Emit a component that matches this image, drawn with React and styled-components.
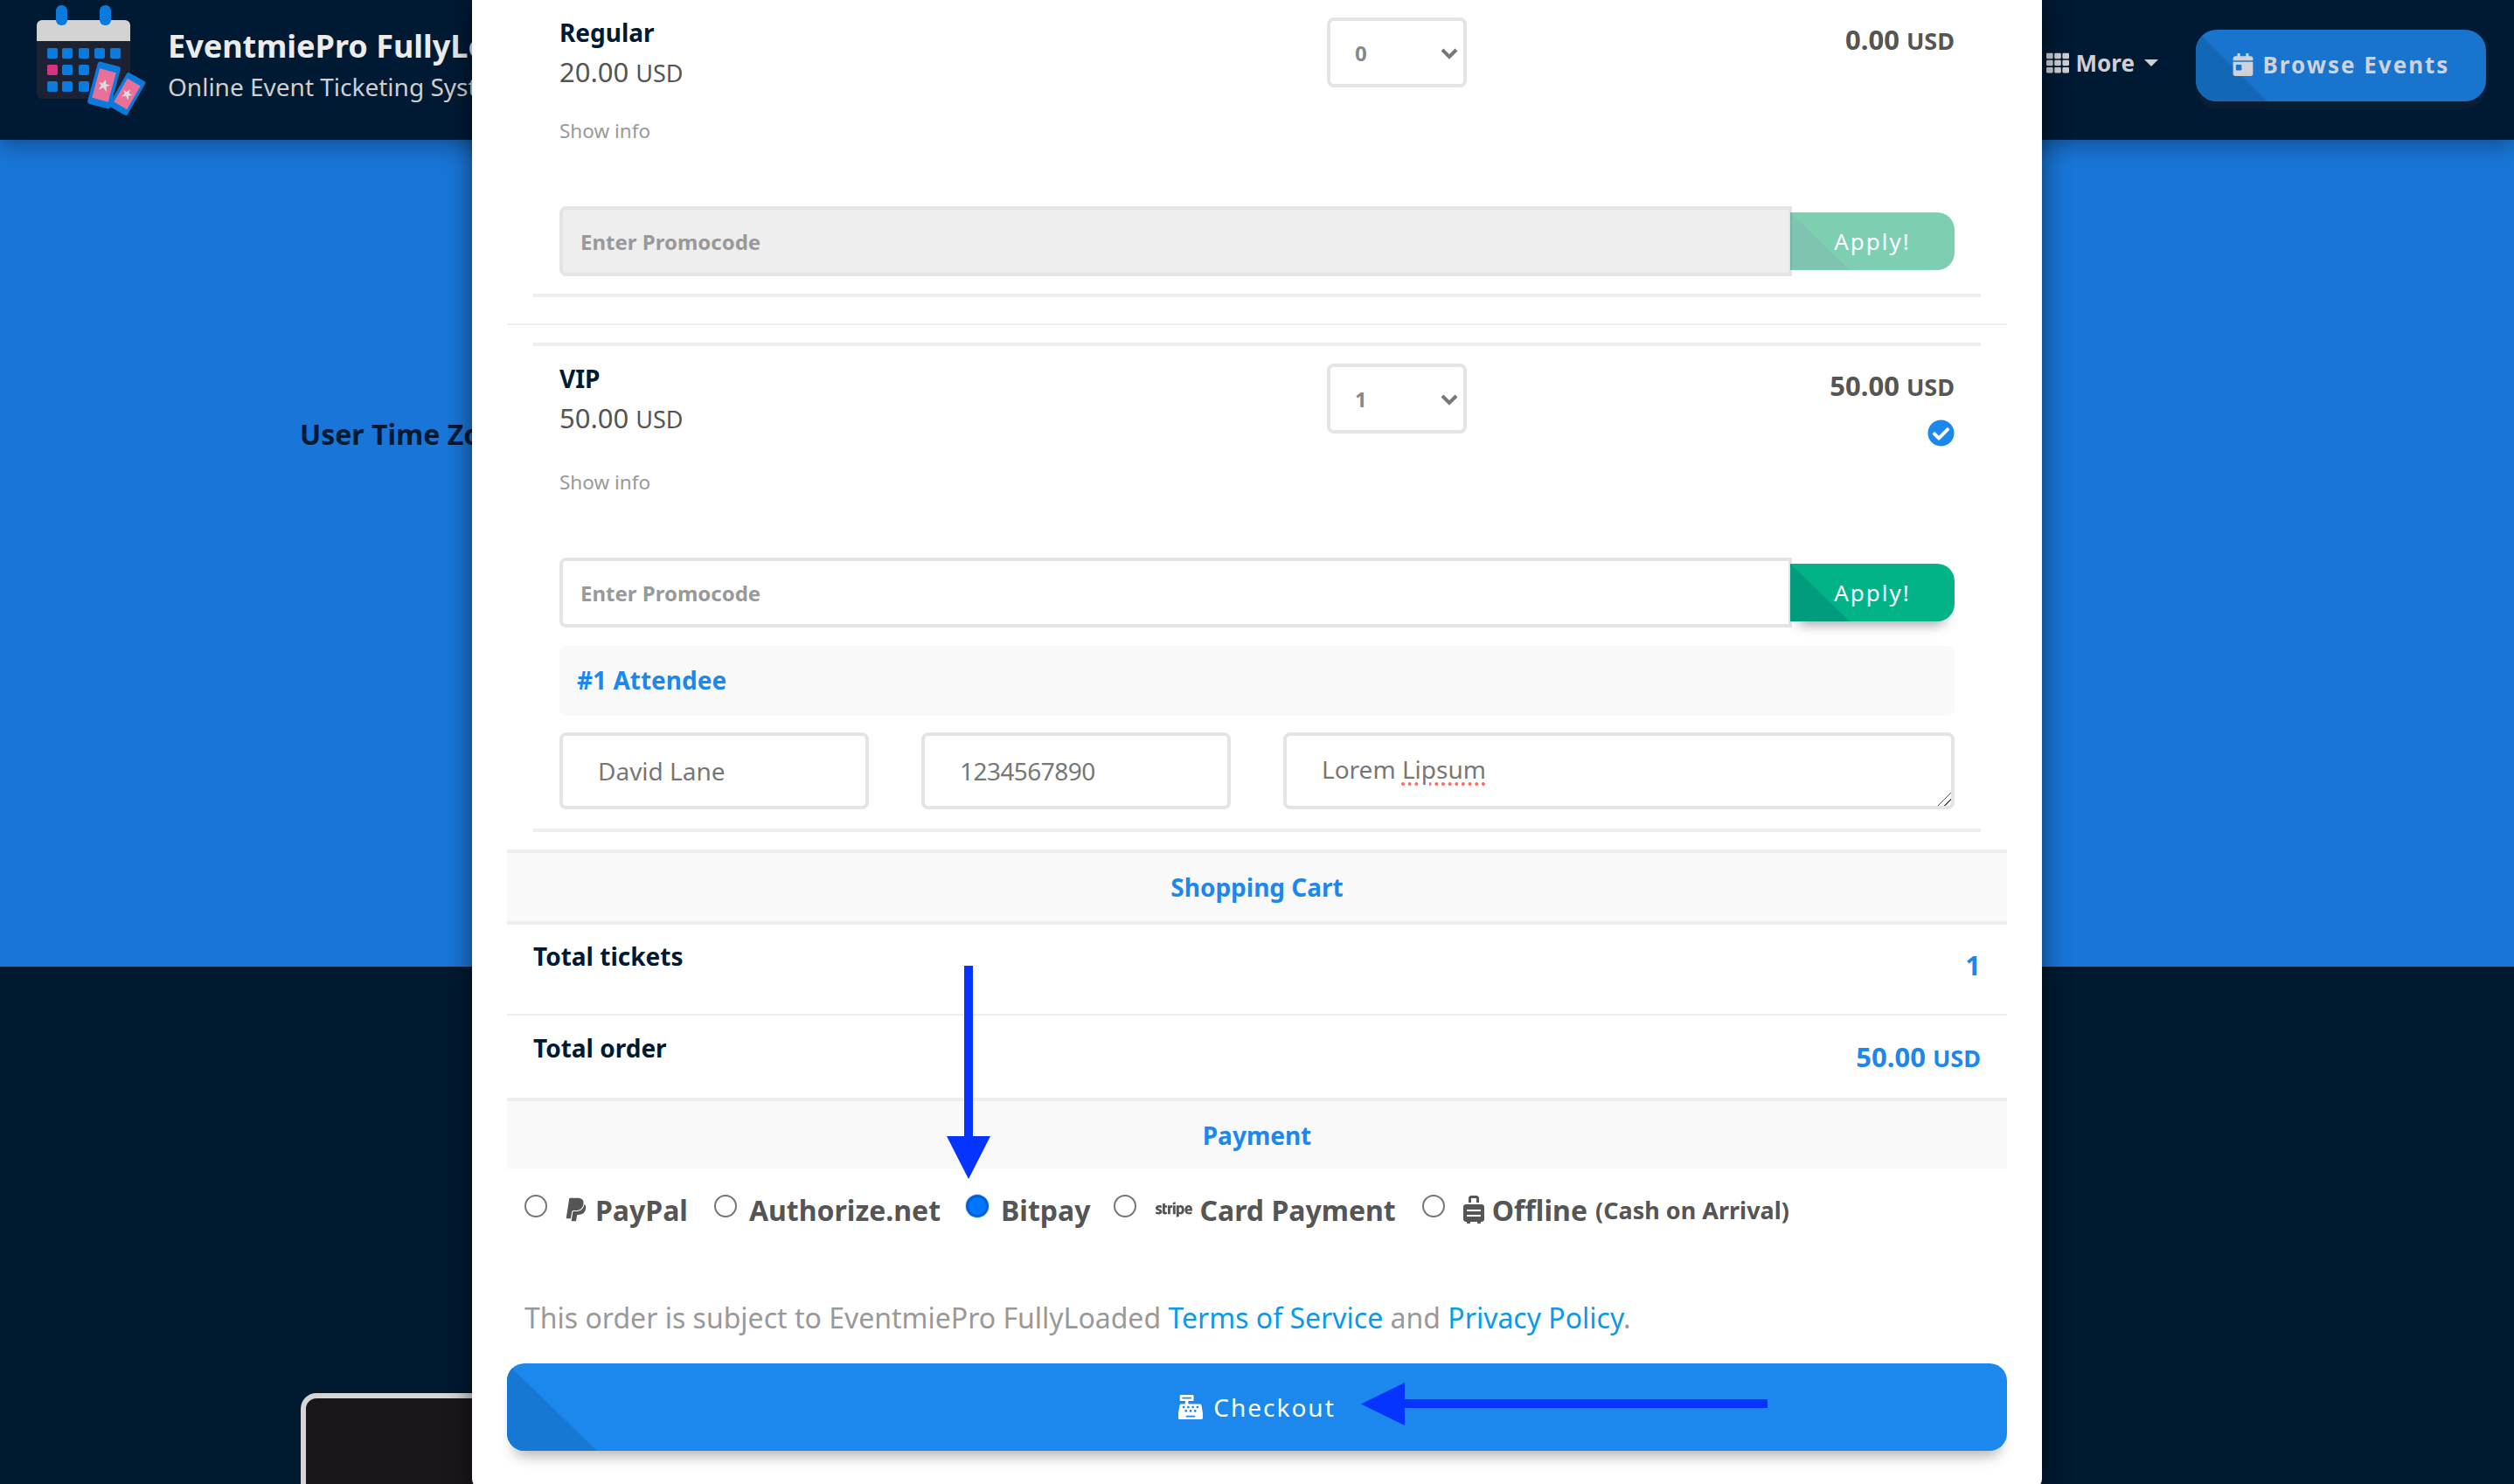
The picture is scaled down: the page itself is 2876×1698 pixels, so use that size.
import React from "react";
import styled, { createGlobalStyle } from "styled-components";
import {
  FaCashRegister,
  FaCalendarDay,
  FaCheckCircle,
  FaPaypal,
  FaStripe,
  FaSuitcaseRolling,
  FaTh,
} from "react-icons/fa";

const GlobalStyle = createGlobalStyle`
  html, body {
    margin: 0;
    padding: 0;
    height: 1698px;
    overflow: hidden;
    background: #001a33;
    font-family: "Noto Sans", "Open Sans", sans-serif;
  }
  * { box-sizing: border-box; }
`;

const Page = styled.div`
  position: relative;
  width: 2876px;
  height: 1698px;
  overflow: hidden;
  background: #001a30;
`;

const Header = styled.header`
  position: relative;
  z-index: 1;
  height: 160px;
  padding: 0 32px 0 42px;
  display: flex;
  align-items: flex-start;
  justify-content: space-between;
  background: #001a33;
  box-shadow: 0 6px 24px rgba(0, 0, 0, 0.35);
`;

const Brand = styled.div`
  display: flex;
  align-items: flex-start;
`;

const LogoSvg = styled.svg`
  width: 130px;
  height: 140px;
  flex: none;
`;

const BrandText = styled.div`
  margin: 28px 0 0 20px;
  white-space: nowrap;
`;

const BrandTitle = styled.div`
  font-size: 36px;
  line-height: 50px;
  font-weight: 700;
  color: #ececec;
`;

const BrandSub = styled.div`
  font-size: 28px;
  line-height: 42px;
  color: #cfcfcf;
`;

const NavRight = styled.nav`
  display: flex;
  align-items: flex-start;
  padding-top: 34px;
`;

const MoreLink = styled.div`
  display: flex;
  align-items: center;
  height: 76px;
  margin-right: 43px;
  font-size: 26px;
  font-weight: 700;
  color: #cfcfd4;
  svg { width: 26px; height: 26px; margin-right: 8px; }
`;

const Caret = styled.span`
  width: 0;
  height: 0;
  margin-left: 11px;
  border-left: 8px solid transparent;
  border-right: 8px solid transparent;
  border-top: 8px solid #cfcfd4;
`;

const SlantButton = styled.button`
  position: relative;
  overflow: hidden;
  display: flex;
  align-items: center;
  justify-content: center;
  border: none;
  padding: 0;
  font-family: inherit;
  letter-spacing: 2px;
  background: ${(p) => p.$bg};
  color: ${(p) => p.$color || "#fff"};
  &::before {
    content: "";
    position: absolute;
    left: 0;
    top: 0;
    bottom: 0;
    width: ${(p) => p.$slant}px;
    background: ${(p) => p.$dark};
    clip-path: polygon(0 0, 100% 100%, 0 100%);
  }
  > * { position: relative; }
`;

const BrowseButton = styled(SlantButton)`
  width: 332px;
  height: 82px;
  padding-bottom: 2px;
  border-radius: 24px;
  font-size: 26px;
  font-weight: 700;
  box-shadow: 0 8px 0 rgba(20, 35, 55, 0.45);
  svg { width: 24px; height: 26px; margin-right: 11px; }
`;

const Hero = styled.section`
  height: 946px;
  padding: 315px 0 0 343px;
  background: #1976d8;
`;

const HeroLabel = styled.div`
  font-size: 32px;
  line-height: 44px;
  font-weight: 700;
  color: #001a33;
  white-space: nowrap;
`;

const Lower = styled.section`
  padding: 488px 0 0 344px;
`;

const VideoCard = styled.div`
  width: 900px;
  height: 300px;
  border: 6px solid #d5d5d5;
  border-radius: 18px;
  background: #1a161a;
`;

const Modal = styled.div`
  position: absolute;
  z-index: 2;
  left: 540px;
  top: 0;
  width: 1796px;
  height: 1704px;
  overflow: hidden;
  border-radius: 0 0 12px 12px;
  background: #fff;
  box-shadow: 0 0 30px rgba(0, 0, 0, 0.55);
`;

const Body = styled.div`
  padding: 0 40px;
`;

const TicketBlock = styled.div`
  margin: 0 30px;
  padding: 0 30px;
  ${(p) => p.$top && "border-top: 4px solid #eee; margin-top: 20px;"}
  ${(p) => p.$bottom && "border-bottom: 4px solid #eee;"}
  padding-bottom: ${(p) => p.$pb}px;
`;

const TicketRow = styled.div`
  display: grid;
  grid-template-columns: 878px 160px 1fr;
  align-items: start;
  height: ${(p) => p.$height}px;
  padding-top: 20px;
`;

const TicketInfo = styled.div`
  margin-top: -3px;
`;

const TicketName = styled.div`
  font-size: 28px;
  line-height: 40px;
  font-weight: 700;
  color: #001a33;
`;

const TicketPrice = styled.div`
  margin-top: 3px;
  font-size: 31px;
  line-height: 44px;
  color: #555;
  small { font-size: 27px; }
`;

const ShowInfo = styled.div`
  margin-top: ${(p) => p.$gap}px;
  font-size: 22.5px;
  line-height: 34px;
  color: #999;
`;

const SelectWrap = styled.div`
  position: relative;
  height: 80px;
  svg {
    position: absolute;
    right: 10px;
    top: 34px;
    width: 20px;
    height: 14px;
  }
`;

const QtySelect = styled.select`
  appearance: none;
  width: 160px;
  height: 80px;
  padding-left: 28px;
  border: 4px solid #e4e4e4;
  border-radius: 8px;
  background: #fff;
  font-family: inherit;
  font-size: 24px;
  font-weight: 700;
  color: #888;
`;

const TicketTotal = styled.div`
  text-align: right;
  padding-top: 3px;
  font-size: 31px;
  line-height: 44px;
  font-weight: 700;
  color: #555;
  small { font-size: 27px; }
`;

const CheckMark = styled.div`
  margin-top: 15px;
  height: 32px;
  color: #1c88ee;
  svg { width: 31px; height: 31px; display: block; margin-left: auto; }
`;

const PromoRow = styled.div`
  display: flex;
  align-items: center;
`;

const PromoInput = styled.input`
  width: 1410px;
  height: 80px;
  padding: 0 20px;
  border: 4px solid #e4e4e4;
  border-radius: 8px 0 0 8px;
  background: ${(p) => (p.disabled ? "#eee" : "#fff")};
  font-family: inherit;
  font-size: 24px;
  font-weight: 700;
  outline: none;
  &::placeholder { color: #999; opacity: 1; }
`;

const ApplyButton = styled(SlantButton)`
  width: 188px;
  height: 66px;
  margin-left: -2px;
  border-radius: 0 20px 20px 0;
  font-size: 26px;
  opacity: ${(p) => (p.disabled ? 0.5 : 1)};
  box-shadow: ${(p) => (p.disabled ? "none" : "0 14px 14px -10px rgba(0, 0, 0, 0.35)")};
`;

const ThinRule = styled.hr`
  margin: 30px 0 0;
  border: none;
  height: 2px;
  background: #eee;
`;

const AttendeeBar = styled.div`
  height: 80px;
  margin-top: 21px;
  padding: 0 0 2px 20px;
  display: flex;
  align-items: center;
  border-radius: 8px;
  background: #f9f9f9;
  font-size: 28px;
  font-weight: 700;
  color: #1c88ee;
`;

const AttendeeFields = styled.div`
  display: grid;
  grid-template-columns: 354px 354px 1fr;
  column-gap: 60px;
  margin-top: 19px;
`;

const FieldInput = styled.input`
  width: 100%;
  height: 88px;
  padding: 0 40px;
  border: 4px solid #e4e4e4;
  border-radius: 8px;
  font-family: inherit;
  font-size: 28px;
  letter-spacing: ${(p) => p.$tight || 0}px;
  color: #777;
  outline: none;
`;

const NoteBox = styled.div`
  height: 88px;
  padding: 19px 40px;
  border: 4px solid #e4e4e4;
  border-radius: 8px;
  font-size: 28px;
  line-height: 38px;
  color: #777;
  overflow: auto;
  resize: vertical;
  &::-webkit-resizer {
    background: linear-gradient(
      135deg,
      transparent 0 47%,
      #555 47% 53%,
      transparent 53% 72%,
      #555 72% 78%,
      transparent 78%
    );
  }
`;

const SpellError = styled.span`
  text-decoration: underline dotted #ff6a5f 4px;
  text-underline-offset: 4px;
`;

const BarHeader = styled.div`
  display: flex;
  align-items: center;
  justify-content: center;
  height: ${(p) => p.$height}px;
  margin-top: ${(p) => p.$mt || 0}px;
  border-top: 4px solid #eee;
  border-bottom: ${(p) => (p.$closed ? "4px solid #eee" : "none")};
  background: #f9f9f9;
  font-size: 28px;
  font-weight: 700;
  color: #1c88ee;
`;

const SummaryRow = styled.div`
  display: flex;
  justify-content: space-between;
  height: ${(p) => p.$height}px;
  padding: ${(p) => p.$pt}px 30px 0;
  border-bottom: ${(p) => (p.$rule ? "2px solid #eee" : "none")};
`;

const SummaryLabel = styled.div`
  font-size: 28px;
  line-height: 40px;
  font-weight: 700;
  color: #001a33;
`;

const SummaryValue = styled.div`
  margin-top: 7px;
  font-size: 31px;
  line-height: 46px;
  font-weight: 700;
  color: #1c88ee;
  small { font-size: 27px; }
`;

const PaymentRow = styled.div`
  display: flex;
  align-items: flex-start;
  gap: 30px;
  padding: 27px 0 0 20px;
`;

const PayOption = styled.label`
  display: flex;
  align-items: center;
  height: 40px;
  margin-left: ${(p) => p.$shift || 0}px;
  font-size: 32px;
  font-weight: 700;
  color: #555;
  white-space: nowrap;
  small { font-size: 27px; margin-left: 9px; }
  svg { flex: none; }
`;

const Radio = styled.input`
  appearance: none;
  flex: none;
  width: 26px;
  height: 26px;
  margin: -8px ${(p) => p.$gap}px 0 0;
  border: 2px solid #767676;
  border-radius: 50%;
  background: #fff;
  &:checked {
    border: 3px solid #005fdb;
    background: #0075ff;
    box-shadow: 0 0 0 1px #cfe2ff;
  }
`;

const PayIcon = styled.span`
  display: flex;
  margin-right: ${(p) => p.$gap}px;
  svg { width: ${(p) => p.$w}px; height: ${(p) => p.$h}px; }
`;

const Terms = styled.p`
  margin: 82px 0 0;
  padding-left: 20px;
  font-size: 32px;
  line-height: 44px;
  color: #999;
  a { color: #0a9ae8; text-decoration: none; }
`;

const CheckoutButton = styled(SlantButton)`
  width: 100%;
  height: 100px;
  margin-top: 30px;
  border-radius: 20px;
  font-size: 28px;
  box-shadow: 0 14px 16px -8px rgba(0, 0, 0, 0.3);
  svg { width: 28px; height: 28px; margin-right: 12px; }
`;

const ArrowSvg = styled.svg`
  position: absolute;
  left: ${(p) => p.$left}px;
  top: ${(p) => p.$top}px;
  width: ${(p) => p.$w}px;
  height: ${(p) => p.$h}px;
`;

const Ticket = ({ x, y, angle, scale }) => (
  <g transform={`translate(${x} ${y}) rotate(${angle}) scale(${scale})`}>
    <rect x="-14" y="-26" width="28" height="52" rx="3" fill="#0a7bdc" />
    <rect x="-10" y="-18" width="20" height="36" fill="#e8709a" />
    <polygon
      points="0,-7 2,-2 7,-2 3,1 5,7 0,3 -5,7 -3,1 -7,-2 -2,-2"
      fill="#ddd"
    />
  </g>
);

const Logo = () => {
  const xs = [12, 29, 48, 66, 84];
  const rows = [
    { y: 55, count: 5 },
    { y: 74, count: 3 },
    { y: 93, count: 3 },
  ];
  return (
    <LogoSvg viewBox="0 0 130 140">
      <rect x="0" y="23" width="107" height="90" rx="6" fill="#1a2233" />
      <path d="M0 47V29a6 6 0 0 1 6-6h95a6 6 0 0 1 6 6v18z" fill="#d3d3d3" />
      <rect x="22" y="6" width="13" height="23" rx="6" fill="#0a7bdc" />
      <rect x="72" y="6" width="13" height="23" rx="6" fill="#0a7bdc" />
      {rows.map((row, r) =>
        xs.slice(0, row.count).map((x, c) => (
          <rect
            key={`${r}-${c}`}
            x={x}
            y={row.y}
            width="12"
            height="12"
            rx="2"
            fill={r === 1 && c === 0 ? "#d63384" : "#0a7bdc"}
          />
        ))
      )}
      <Ticket x={103.5} y={107.5} angle={30} scale={0.86} />
      <Ticket x={77} y={97.5} angle={15} scale={0.96} />
    </LogoSvg>
  );
};

const Chevron = () => (
  <svg viewBox="0 0 20 14">
    <path d="M2 3l8 8 8-8" fill="none" stroke="#777" strokeWidth="4" />
  </svg>
);

const PAY_OPTIONS = [
  { label: "PayPal", gap: 20, icon: <PayIcon $gap={9} $w={26} $h={30}><FaPaypal /></PayIcon> },
  { label: "Authorize.net", gap: 14 },
  { label: "Bitpay", gap: 14, shift: -1, checked: true },
  { label: "Card Payment", gap: 22, shift: -3, icon: <PayIcon $gap={8} $w={42} $h={34}><FaStripe /></PayIcon> },
  {
    label: "Offline",
    gap: 20,
    icon: <PayIcon $gap={8} $w={26} $h={32}><FaSuitcaseRolling /></PayIcon>,
    note: "(Cash on Arrival)",
  },
];

export default function App() {
  return (
    <Page>
      <GlobalStyle />
      <Header>
        <Brand>
          <Logo />
          <BrandText>
            <BrandTitle>EventmiePro FullyLoaded</BrandTitle>
            <BrandSub>Online Event Ticketing System</BrandSub>
          </BrandText>
        </Brand>
        <NavRight>
          <MoreLink>
            <FaTh />
            More
            <Caret />
          </MoreLink>
          <BrowseButton $bg="#1874cc" $dark="#1268b5" $slant={82} $color="#cfd2d8">
            <FaCalendarDay />
            <span>Browse Events</span>
          </BrowseButton>
        </NavRight>
      </Header>
      <Hero>
        <HeroLabel>User Time Zone</HeroLabel>
      </Hero>
      <Lower>
        <VideoCard />
      </Lower>

      <Modal>
        <Body>
          <TicketBlock $bottom $pb={20}>
            <TicketRow $height={236}>
              <TicketInfo>
                <TicketName>Regular</TicketName>
                <TicketPrice>
                  20.00 <small>USD</small>
                </TicketPrice>
                <ShowInfo $gap={27}>Show info</ShowInfo>
              </TicketInfo>
              <SelectWrap>
                <QtySelect defaultValue="0">
                  <option>0</option>
                  <option>1</option>
                </QtySelect>
                <Chevron />
              </SelectWrap>
              <TicketTotal>
                0.00 <small>USD</small>
              </TicketTotal>
            </TicketRow>
            <PromoRow>
              <PromoInput disabled placeholder="Enter Promocode" />
              <ApplyButton disabled $bg="#009f67" $dark="#008a66" $slant={68}>
                <span>Apply!</span>
              </ApplyButton>
            </PromoRow>
          </TicketBlock>
          <ThinRule />
          <TicketBlock $top $bottom $pb={22}>
            <TicketRow $height={242}>
              <TicketInfo>
                <TicketName>VIP</TicketName>
                <TicketPrice>
                  50.00 <small>USD</small>
                </TicketPrice>
                <ShowInfo $gap={33}>Show info</ShowInfo>
              </TicketInfo>
              <SelectWrap>
                <QtySelect defaultValue="1">
                  <option>0</option>
                  <option>1</option>
                </QtySelect>
                <Chevron />
              </SelectWrap>
              <TicketTotal>
                50.00 <small>USD</small>
                <CheckMark>
                  <FaCheckCircle />
                </CheckMark>
              </TicketTotal>
            </TicketRow>
            <PromoRow>
              <PromoInput placeholder="Enter Promocode" />
              <ApplyButton $bg="#02b388" $dark="#019b7e" $slant={68}>
                <span>Apply!</span>
              </ApplyButton>
            </PromoRow>
            <AttendeeBar>#1 Attendee</AttendeeBar>
            <AttendeeFields>
              <FieldInput defaultValue="David Lane" />
              <FieldInput defaultValue="1234567890" $tight={-0.55} />
              <NoteBox>
                Lorem <SpellError>Lipsum</SpellError>
              </NoteBox>
            </AttendeeFields>
          </TicketBlock>

          <BarHeader $closed $height={86} $mt={20}>Shopping Cart</BarHeader>
          <SummaryRow $rule $height={104} $pt={16}>
            <SummaryLabel>Total tickets</SummaryLabel>
            <SummaryValue>1</SummaryValue>
          </SummaryRow>
          <SummaryRow $height={94} $pt={17}>
            <SummaryLabel>Total order</SummaryLabel>
            <SummaryValue>
              50.00 <small>USD</small>
            </SummaryValue>
          </SummaryRow>
          <BarHeader $height={81}>Payment</BarHeader>

          <PaymentRow>
            {PAY_OPTIONS.map((opt) => (
              <PayOption key={opt.label} $shift={opt.shift}>
                <Radio type="radio" name="pay" $gap={opt.gap} defaultChecked={opt.checked} />
                {opt.icon}
                {opt.label}
                {opt.note && <small>{opt.note}</small>}
              </PayOption>
            ))}
          </PaymentRow>

          <Terms>
            This order is subject to EventmiePro FullyLoaded <a href="#terms">Terms of Service</a> and{" "}
            <a href="#privacy">Privacy Policy</a>.
          </Terms>

          <CheckoutButton $bg="#1c88ee" $dark="#1778d4" $slant={103}>
            <FaCashRegister />
            <span>Checkout</span>
          </CheckoutButton>
        </Body>

        <ArrowSvg $left={543} $top={1105} $w={50} $h={244} viewBox="0 0 50 244">
          <path d="M20 0h10v195h20L25 244 0 195h20z" fill="#0533ff" />
        </ArrowSvg>
        <ArrowSvg $left={1017} $top={1582} $w={465} $h={50} viewBox="0 0 465 50">
          <path d="M465 19v10H50v20L0 24.500 50 0v19z" fill="#0533ff" />
        </ArrowSvg>
      </Modal>
    </Page>
  );
}
